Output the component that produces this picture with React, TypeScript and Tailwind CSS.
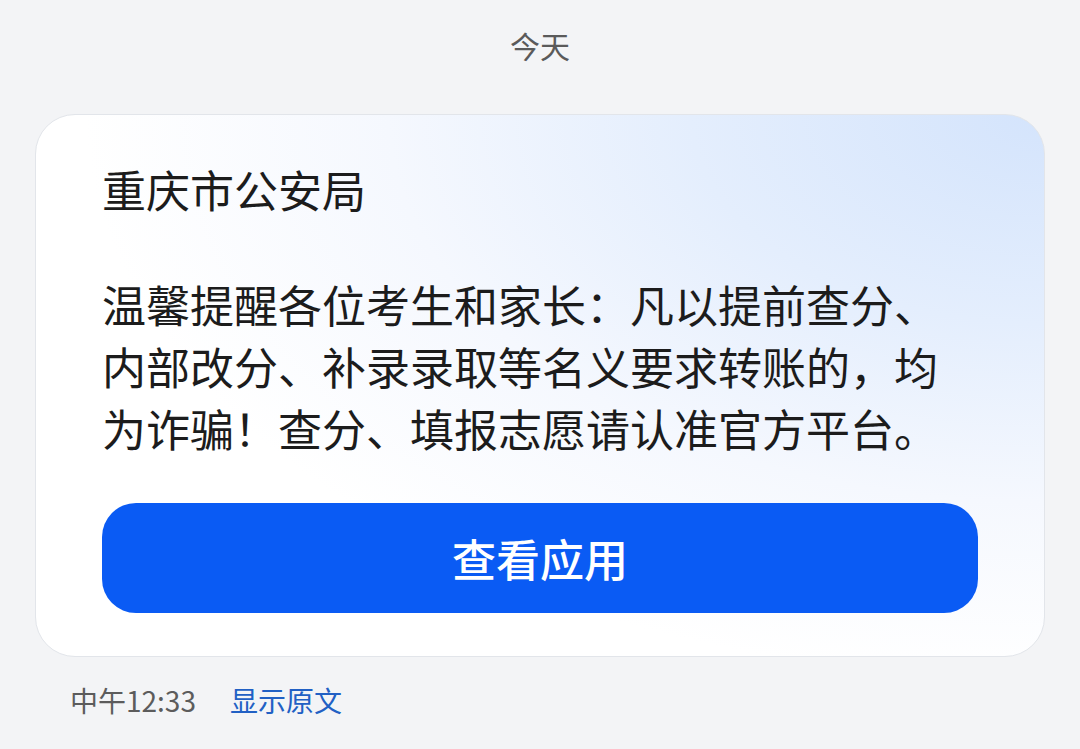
const CJK = "font-['Noto_Sans_CJK_SC','Noto_Sans',sans-serif]";

const lines = [
  "温馨提醒各位考生和家长：凡以提前查分、",
  "内部改分、补录录取等名义要求转账的，均",
  "为诈骗！查分、填报志愿请认准官方平台。",
];

export default function App() {
  return (
    <div className={`min-h-[749px] w-[1080px] bg-[#f3f4f6] ${CJK}`}>
      <div className="pt-[24px] text-center text-[30px] leading-[42px] text-[#5a5a5a]">
        今天
      </div>

      <div className="px-[35px] pt-[48px]">
        {/* message card */}
        <div className="rounded-[40px] border border-[#e2e5ea] bg-[radial-gradient(ellipse_100%_110%_at_100%_0%,#d4e4fc_0%,#e4eefd_35%,#f5f8fe_65%,#ffffff_95%)] pt-[42px] pb-[43px] pl-[66px] pr-[66px]">
          <h1 className="text-[44px] leading-[64px] text-[#1c1c1c]">重庆市公安局</h1>
          <p className="mt-[52px] text-[44px] leading-[62px] text-[#1c1c1c]">
            {lines.map((l) => (
              <span key={l} className="block whitespace-nowrap">
                {l}
              </span>
            ))}
          </p>
          <button className="mt-[44px] flex h-[110px] w-full items-center justify-center rounded-[34px] bg-[#0a5bf4] text-[44px] font-medium text-white">
            查看应用
          </button>
        </div>

        <div className="mt-[23px] flex items-center gap-[34px] pl-[35px] text-[28px] leading-[40px]">
          <span className="text-[#5c5c5c]">中午12:33</span>
          <span className="text-[#2160c4]">显示原文</span>
        </div>
      </div>
    </div>
  );
}
